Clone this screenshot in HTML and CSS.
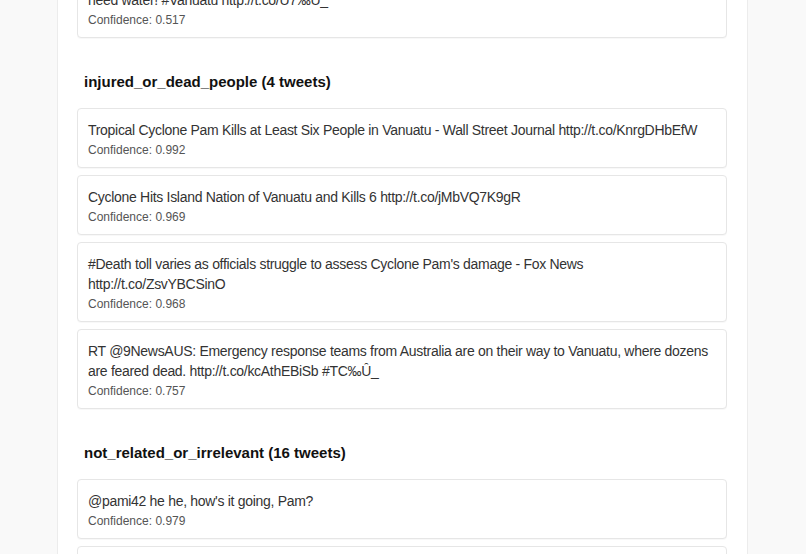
FILE: index.html
```html
<!DOCTYPE html>
<html>
<head>
<meta charset="utf-8">
<link rel="stylesheet" href="styles.css">
</head>
<body>
<div class="page">
  <section class="group">
    <div class="card">
      <p class="text">RT @ABCNews24: Cyclone Pam: residents of Port Vila say they have no power and<br>need water! #Vanuatu http://t.co/U7‰Û_</p>
      <p class="conf">Confidence: 0.517</p>
    </div>
  </section>

  <section class="group">
    <h2 class="heading">injured_or_dead_people (4 tweets)</h2>
    <div class="card">
      <p class="text">Tropical Cyclone Pam Kills at Least Six People in Vanuatu - Wall Street Journal http://t.co/KnrgDHbEfW</p>
      <p class="conf">Confidence: 0.992</p>
    </div>
    <div class="card">
      <p class="text">Cyclone Hits Island Nation of Vanuatu and Kills 6 http://t.co/jMbVQ7K9gR</p>
      <p class="conf">Confidence: 0.969</p>
    </div>
    <div class="card">
      <p class="text">#Death toll varies as officials struggle to assess Cyclone Pam's damage - Fox News http://t.co/ZsvYBCSinO</p>
      <p class="conf">Confidence: 0.968</p>
    </div>
    <div class="card">
      <p class="text">RT @9NewsAUS: Emergency response teams from Australia are on their way to Vanuatu, where dozens are feared dead. http://t.co/kcAthEBiSb #TC‰Û_</p>
      <p class="conf">Confidence: 0.757</p>
    </div>
  </section>

  <section class="group">
    <h2 class="heading">not_related_or_irrelevant (16 tweets)</h2>
    <div class="card">
      <p class="text">@pami42 he he, how's it going, Pam?</p>
      <p class="conf">Confidence: 0.979</p>
    </div>
    <div class="card">
      <p class="text">RT @Vanuatu_Info: Stay safe everyone in Vanuatu</p>
      <p class="conf">Confidence: 0.951</p>
    </div>
  </section>
</div>
</body>
</html>
```
FILE: styles.css
```css
html, body {
  margin: 0;
  padding: 0;
  background: #f9f9f9;
  font-family: "Liberation Sans", Arial, sans-serif;
  overflow: hidden;
}

.page {
  width: 691px;
  margin: -42px 0 0 57px;
  padding: 0 20px 40px 19px;
  box-sizing: border-box;
  background: #fff;
  border-left: 1px solid #ececec;
  border-right: 1px solid #ececec;
  min-height: 700px;
}

.group {
  margin-bottom: 27px;
}

.heading {
  margin: 0 0 16px;
  padding: 7px 0 0 7px;
  font-size: 15px;
  font-weight: bold;
  color: #111;
  line-height: 20px;
}

.card {
  border: 1px solid #e6e6e6;
  border-radius: 4px;
  background: #fff;
  padding: 11px 10px 8px;
  margin-bottom: 7px;
  box-shadow: 0 1px 1px rgba(0,0,0,0.03);
}

.text {
  margin: 0;
  font-size: 14px;
  line-height: 20px;
  letter-spacing: -0.3px;
  color: #333;
}

.conf {
  margin: 1px 0 0;
  font-size: 12px;
  line-height: 18px;
  color: #555;
}
```
